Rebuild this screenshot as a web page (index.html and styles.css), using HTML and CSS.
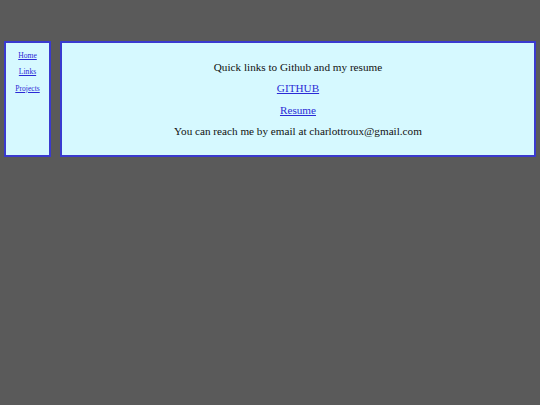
FILE: index.html
```html
<!DOCTYPE html>
<html>
<head>
<meta charset="utf-8">
<link rel="stylesheet" href="styles.css">
</head>
<body>
<div class="page">
  <nav class="sidebar">
    <a href="#">Home</a>
    <a href="#">Links</a>
    <a href="#">Projects</a>
  </nav>
  <main class="content">
    <p>Quick links to Github and my resume</p>
    <p><a href="#">GITHUB</a></p>
    <p><a href="#">Resume</a></p>
    <p>You can reach me by email at charlottroux@gmail.com</p>
  </main>
</div>
</body>
</html>
```
FILE: styles.css
```css
html, body {
  margin: 0;
  padding: 0;
  background: #5a5a5a;
}
body {
  font-family: "Liberation Serif", serif;
}
.page {
  display: flex;
  gap: 9px;
  padding: 41px 4px 0 4px;
  align-items: stretch;
}
.sidebar, .content {
  background: #d6f9ff;
  border: 2px solid #3a3acf;
  box-sizing: border-box;
  height: 116px;
}
.sidebar {
  width: 47px;
  display: flex;
  flex-direction: column;
  align-items: center;
  gap: 7.5px;
  padding-top: 7.5px;
  font-size: 7.6px;
  line-height: 9px;
}
.sidebar a {
  color: #2b2bd6;
}
.content {
  flex: 1;
  display: flex;
  flex-direction: column;
  align-items: center;
  gap: 8.6px;
  font-size: 11.2px;
  line-height: 13px;
  color: #111;
  padding-top: 17.5px;
}
.content p {
  margin: 0;
}
.content a {
  color: #2b2bd6;
}
```
